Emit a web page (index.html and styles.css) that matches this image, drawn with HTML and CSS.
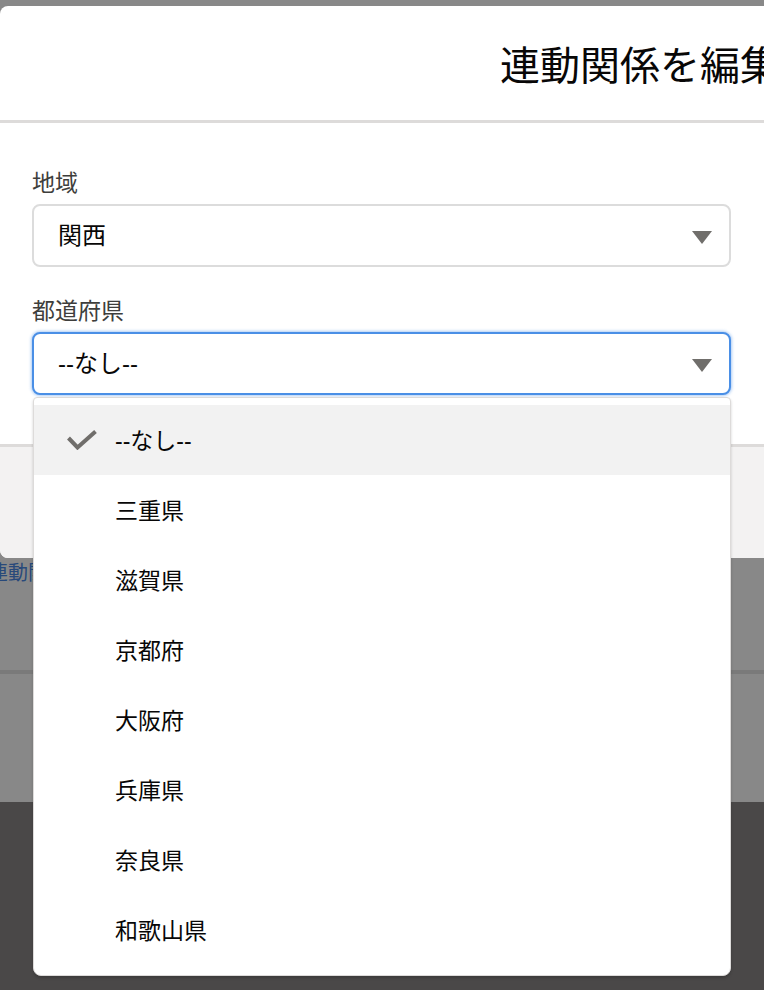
FILE: index.html
```html
<!DOCTYPE html>
<html lang="ja">
<head>
<meta charset="utf-8">
<title>連動関係を編集</title>
<link rel="stylesheet" href="styles.css">
</head>
<body>
<div class="screen">
  <div class="modal">
    <header class="modal-header">
      <h2 class="modal-title">連動関係を編集</h2>
    </header>
    <div class="modal-body">
      <div class="field">
        <div class="field-label">地域</div>
        <div class="select">
          <span class="select-value">関西</span>
          <svg class="caret" width="20" height="13" viewBox="0 0 20 13"><polygon points="0,0 20,0 10,13" fill="#706e6b"/></svg>
        </div>
      </div>
      <div class="field">
        <div class="field-label">都道府県</div>
        <div class="select select-focus">
          <span class="select-value">--なし--</span>
          <svg class="caret" width="20" height="13" viewBox="0 0 20 13"><polygon points="0,0 20,0 10,13" fill="#706e6b"/></svg>
        </div>
        <ul class="dropdown">
          <li class="option option-selected">
            <svg class="check" width="30" height="20" viewBox="0 0 30 20"><polyline points="1.5,8 10.5,17.5 28.5,1.5" fill="none" stroke="#706e6b" stroke-width="4" stroke-linejoin="miter"/></svg>
            <span>--なし--</span>
          </li>
          <li class="option"><span class="check-space"></span><span>三重県</span></li>
          <li class="option"><span class="check-space"></span><span>滋賀県</span></li>
          <li class="option"><span class="check-space"></span><span>京都府</span></li>
          <li class="option"><span class="check-space"></span><span>大阪府</span></li>
          <li class="option"><span class="check-space"></span><span>兵庫県</span></li>
          <li class="option"><span class="check-space"></span><span>奈良県</span></li>
          <li class="option"><span class="check-space"></span><span>和歌山県</span></li>
        </ul>
      </div>
    </div>
    <footer class="modal-footer"></footer>
  </div>
  <div class="under">
    <span class="under-link">連動関係</span>
  </div>
  <div class="under-rule"></div>
  <div class="under-lower"></div>
  <div class="dark"></div>
</div>
</body>
</html>
```

FILE: styles.css
```css
html, body {
  margin: 0;
  padding: 0;
}
body {
  overflow: hidden;
  font-family: "Liberation Sans", "Noto Sans CJK JP", sans-serif;
  color: #080707;
}
.screen {
  height: 990px;
  display: flex;
  flex-direction: column;
  background: #888888;
}
.modal {
  margin-top: 6px;
  background: #ffffff;
  border-radius: 8px 0 0 8px;
}
.modal-header {
  height: 114px;
  border-bottom: 3px solid #dddbda;
  display: flex;
  align-items: center;
  padding-left: 500px;
  overflow: hidden;
  border-radius: 8px 0 0 0;
}
.modal-title {
  margin: 0;
  font-family: "Noto Sans CJK JP", sans-serif;
  font-weight: 400;
  font-size: 40px;
  line-height: 50px;
  white-space: nowrap;
  color: #080707;
}
.modal-body {
  padding: 43px 33px 49px 32px;
}
.field {
  position: relative;
}
.field + .field {
  margin-top: 27px;
}
.field-label {
  font-family: "Noto Sans CJK JP", sans-serif;
  font-size: 23px;
  line-height: 30px;
  color: #3e3e3c;
  margin-bottom: 8px;
}
.select {
  box-sizing: border-box;
  height: 63px;
  border: 2px solid #dcdcdc;
  border-radius: 8px;
  display: flex;
  align-items: center;
  justify-content: space-between;
  padding: 0 17px 0 24px;
  background: #ffffff;
}
.select-focus {
  border-color: #4a8fe6;
  box-shadow: 0 0 3px 1px rgba(74, 143, 230, 0.45);
}
.select-value {
  font-size: 24px;
  line-height: 30px;
  color: #080707;
}
.caret {
  display: block;
  margin-top: 3px;
}
.dropdown {
  position: absolute;
  top: calc(100% + 2px);
  left: 1px;
  right: 0;
  margin: 0;
  padding: 7px 0 10px;
  list-style: none;
  background: #ffffff;
  border: 1px solid #dddbda;
  border-radius: 4px 4px 8px 8px;
  box-shadow: 0 2px 3px 0 rgba(0, 0, 0, 0.18);
  z-index: 10;
}
.option {
  height: 70px;
  display: flex;
  align-items: center;
  gap: 18px;
  padding-left: 33px;
  font-size: 23px;
  color: #080707;
}
.option span:last-child {
  margin-top: -3px;
}
.option-selected {
  background: #f2f2f2;
}
.check, .check-space {
  display: block;
  width: 30px;
  height: 20px;
  flex: none;
}
.modal-footer {
  height: 111px;
  border-top: 3px solid #dddbda;
  background: #f3f2f2;
  border-radius: 0 0 0 8px;
}
.under {
  height: 110px;
  padding-top: 2px;
  overflow: hidden;
  white-space: nowrap;
}
.under-link {
  display: inline-block;
  margin-left: -12px;
  font-family: "Noto Sans CJK JP", sans-serif;
  font-size: 20px;
  line-height: 24px;
  color: #28497a;
}
.under-rule {
  height: 4px;
  background: #7a7a7a;
}
.under-lower {
  height: 128px;
  background: #888888;
}
.dark {
  flex: 1;
  background: #4a4848;
}
```
